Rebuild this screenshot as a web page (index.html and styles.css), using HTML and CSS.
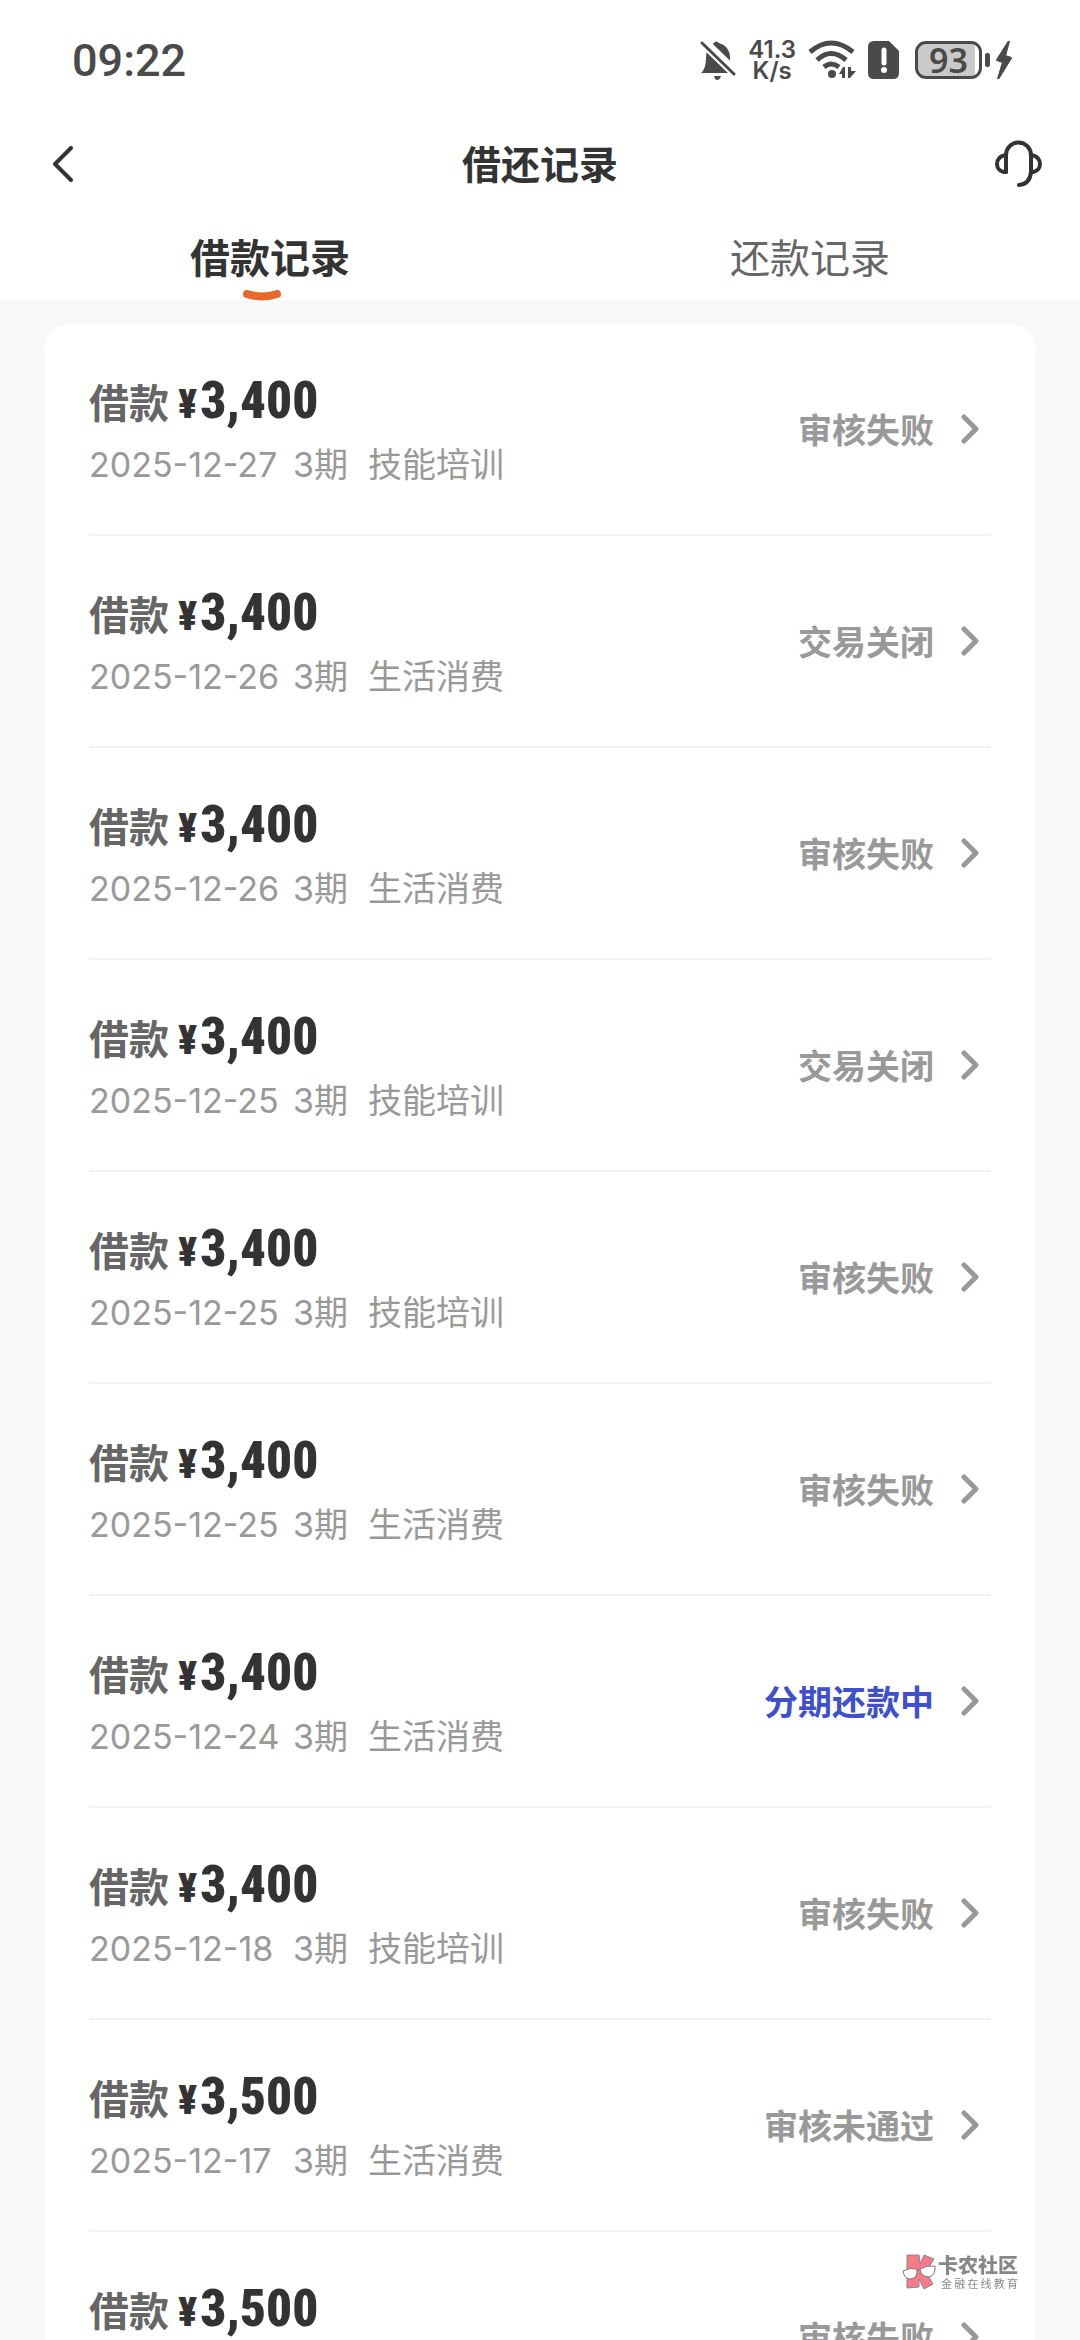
FILE: index.html
```html
<!DOCTYPE html>
<html lang="zh-CN">
  <head>
    <meta charset="utf-8">
    <meta name="viewport" content="width=device-width, initial-scale=1">
    <title>借还记录</title>
    <link rel="stylesheet" href="styles.css">
  </head>
  <body>
    <svg width="0" height="0" class="defs">
      <symbol id="arrow" viewBox="0 0 18 30">
        <path d="M3 3L15 15L3 27" fill="none" stroke="#999" stroke-width="5" stroke-linecap="round" stroke-linejoin="round"/>
      </symbol>
    </svg>

    <div class="app">
      <div class="status-bar">
        <span class="time">09:22</span>
        <div class="status-icons">
          <svg class="bell" width="36" height="40" viewBox="0 0 36 40">
            <path d="M10 6Q12 4 14 3Q16 0 19 3Q30 6 30 18Q30 29 34 33H1Q6 29 6 18Q6 10 10 6Z" fill="#4a4a4a"/>
            <path d="M14 36H21Q20 40 17 40Q15 40 14 36Z" fill="#4a4a4a"/>
            <path d="M0 -5L38 32" stroke="#fff" stroke-width="5"/>
            <path d="M2 3L34 34" stroke="#fff" stroke-width="7"/>
            <path d="M2 3L34 34" stroke="#4a4a4a" stroke-width="3" stroke-linecap="round"/>
          </svg>
          <div class="speed"><span>41.3</span><span>K/s</span></div>
          <svg class="wifi" width="48" height="40" viewBox="0 0 48 40">
            <g fill="none" stroke="#4a4a4a" stroke-width="5">
              <path d="M2 12Q23 -6 45 12"/>
              <path d="M9 20Q23 7 38 20"/>
              <path d="M16 27Q23 21 31 27"/>
            </g>
            <circle cx="24" cy="34" r="4" fill="#4a4a4a"/>
            <path d="M31 34L35 27H37V38H34V34Z" fill="#4a4a4a"/>
            <path d="M40 27H43V31H48L42 38H40Z" fill="#4a4a4a"/>
          </svg>
          <svg class="sim" width="32" height="38" viewBox="0 0 32 38">
            <path d="M6 0H21L31 10V32Q31 38 25 38H6Q0 38 0 32V6Q0 0 6 0Z" fill="#4a4a4a"/>
            <path d="M16 9V22" stroke="#fff" stroke-width="5" stroke-linecap="round"/>
            <circle cx="16" cy="29" r="3" fill="#fff"/>
          </svg>
          <div class="battery">
            <span class="level">93</span>
            <span class="nub"></span>
          </div>
          <svg class="bolt" width="16" height="38" viewBox="0 0 16 38">
            <path d="M13 0L1 19L7 21L2 38L15 17L9 15Z" fill="#4a4a4a" stroke="#4a4a4a" stroke-width="2" stroke-linejoin="round"/>
          </svg>
        </div>
      </div>

      <header class="nav">
        <button class="icon-button back" aria-label="返回">
          <svg width="20" height="36" viewBox="0 0 20 36">
            <path d="M18 2L2 18L18 34" fill="none" stroke="#333" stroke-width="4" stroke-linecap="round" stroke-linejoin="round"/>
          </svg>
        </button>
        <h1>借还记录</h1>
        <button class="icon-button service" aria-label="客服">
          <svg width="47" height="48" viewBox="0 0 47 48">
            <g fill="none" stroke="#333" stroke-width="4" stroke-linecap="round">
              <path d="M11 32V15A12 12 0 0 1 36 15V32Q35 44 24 45"/>
              <path d="M11 15C-1 16 -1 32 11 32"/>
              <path d="M36 15C48 16 48 32 36 32"/>
            </g>
          </svg>
        </button>
      </header>

      <div class="tabs" role="tablist">
        <button class="tab active" role="tab" aria-selected="true">
          <span>借款记录</span>
          <svg class="mark" width="40" height="11" viewBox="0 0 40 11">
            <path d="M5 4Q20 9 35 4" fill="none" stroke="#e8682c" stroke-width="8" stroke-linecap="round"/>
          </svg>
        </button>
        <button class="tab" role="tab" aria-selected="false"><span>还款记录</span></button>
      </div>

      <main>
        <ul class="list">
          <li><a class="record" href="#">
            <div class="info">
              <div class="title">借款 <b><small>¥</small>3,400</b></div>
              <div class="meta"><span class="date">2025-12-27</span><span class="term">3期</span><span>技能培训</span></div>
            </div>
            <span class="state">审核失败</span>
            <svg class="arrow"><use href="#arrow"/></svg>
          </a></li>
          <li><a class="record" href="#">
            <div class="info">
              <div class="title">借款 <b><small>¥</small>3,400</b></div>
              <div class="meta"><span class="date">2025-12-26</span><span class="term">3期</span><span>生活消费</span></div>
            </div>
            <span class="state">交易关闭</span>
            <svg class="arrow"><use href="#arrow"/></svg>
          </a></li>
          <li><a class="record" href="#">
            <div class="info">
              <div class="title">借款 <b><small>¥</small>3,400</b></div>
              <div class="meta"><span class="date">2025-12-26</span><span class="term">3期</span><span>生活消费</span></div>
            </div>
            <span class="state">审核失败</span>
            <svg class="arrow"><use href="#arrow"/></svg>
          </a></li>
          <li><a class="record" href="#">
            <div class="info">
              <div class="title">借款 <b><small>¥</small>3,400</b></div>
              <div class="meta"><span class="date">2025-12-25</span><span class="term">3期</span><span>技能培训</span></div>
            </div>
            <span class="state">交易关闭</span>
            <svg class="arrow"><use href="#arrow"/></svg>
          </a></li>
          <li><a class="record" href="#">
            <div class="info">
              <div class="title">借款 <b><small>¥</small>3,400</b></div>
              <div class="meta"><span class="date">2025-12-25</span><span class="term">3期</span><span>技能培训</span></div>
            </div>
            <span class="state">审核失败</span>
            <svg class="arrow"><use href="#arrow"/></svg>
          </a></li>
          <li><a class="record" href="#">
            <div class="info">
              <div class="title">借款 <b><small>¥</small>3,400</b></div>
              <div class="meta"><span class="date">2025-12-25</span><span class="term">3期</span><span>生活消费</span></div>
            </div>
            <span class="state">审核失败</span>
            <svg class="arrow"><use href="#arrow"/></svg>
          </a></li>
          <li><a class="record" href="#">
            <div class="info">
              <div class="title">借款 <b><small>¥</small>3,400</b></div>
              <div class="meta"><span class="date">2025-12-24</span><span class="term">3期</span><span>生活消费</span></div>
            </div>
            <span class="state repaying">分期还款中</span>
            <svg class="arrow"><use href="#arrow"/></svg>
          </a></li>
          <li><a class="record" href="#">
            <div class="info">
              <div class="title">借款 <b><small>¥</small>3,400</b></div>
              <div class="meta"><span class="date">2025-12-18</span><span class="term">3期</span><span>技能培训</span></div>
            </div>
            <span class="state">审核失败</span>
            <svg class="arrow"><use href="#arrow"/></svg>
          </a></li>
          <li><a class="record" href="#">
            <div class="info">
              <div class="title">借款 <b><small>¥</small>3,500</b></div>
              <div class="meta"><span class="date">2025-12-17</span><span class="term">3期</span><span>生活消费</span></div>
            </div>
            <span class="state">审核未通过</span>
            <svg class="arrow"><use href="#arrow"/></svg>
          </a></li>
          <li><a class="record" href="#">
            <div class="info">
              <div class="title">借款 <b><small>¥</small>3,500</b></div>
            </div>
            <span class="state">审核失败</span>
            <svg class="arrow"><use href="#arrow"/></svg>
          </a></li>
        </ul>
      </main>
    </div>

    <div class="watermark">
      <svg width="34" height="36" viewBox="0 0 34 36">
        <path d="M5 1L17 1L18 10L22 1L32 5L24 18L31 30L22 35L17 25V33L5 34Z" fill="#f77a88" stroke="#888" stroke-linejoin="round"/>
        <path d="M1 17Q8 13 15 15Q16 24 9 25Q2 25 1 17Z" fill="#fff" stroke="#777"/>
        <path d="M18 15Q25 11 33 12Q34 21 27 23Q19 23 18 15Z" fill="#fff" stroke="#777"/>
        <path d="M15 16L18 15" stroke="#777"/>
      </svg>
      <div class="brand">
        <strong>卡农社区</strong>
        <span>金融在线教育</span>
      </div>
    </div>
  </body>
</html>
```
FILE: styles.css
```css
* {
  box-sizing: border-box;
}

body {
  margin: 0;
  background-color: #f8f8f8;
  color: #333;
  font-family: "Noto Sans CJK SC", sans-serif;
}

button {
  padding: 0;
  border: none;
  background: none;
  color: inherit;
  font: inherit;
  cursor: pointer;
}

svg {
  display: block;
  flex: none;
}

.defs {
  position: absolute;
}

.app {
  display: flex;
  flex-direction: column;
  height: 100vh;
}

/* status bar */

.status-bar {
  display: flex;
  flex: none;
  align-items: center;
  justify-content: space-between;
  height: 120px;
  padding: 0 68px 0 72px;
  background-color: #fff;
  color: #4a4a4a;
}

.time {
  font: 500 45px Roboto, sans-serif;
}

.status-icons {
  display: flex;
  align-items: center;
  gap: 12px;
}

.speed {
  display: flex;
  flex-direction: column;
  align-items: center;
  font: 600 24px/21px Inter, sans-serif;
}

.battery {
  display: flex;
  align-items: center;
  gap: 3px;
  margin-left: 3px;
}

.level {
  width: 67px;
  height: 38px;
  border: 3px solid #4a4a4a;
  border-radius: 11px;
  background: linear-gradient(to right, #cacaca 93%, #fff 93%);
  font: 600 34px/32px "Noto Sans", sans-serif;
  text-align: center;
}

.nub {
  width: 5px;
  height: 14px;
  border-radius: 2px;
  background-color: #4a4a4a;
}

.bolt {
  margin-left: -6px;
}

/* title and tabs */

.nav {
  display: grid;
  grid-template-columns: 1fr auto 1fr;
  flex: none;
  align-items: center;
  height: 88px;
  padding: 0 38px;
  background-color: #fff;
}

.nav h1 {
  margin: 0;
  padding-bottom: 4px;
  font-size: 39px;
  line-height: 48px;
}

.back {
  justify-self: start;
  padding-left: 15px;
}

.service {
  justify-self: end;
}

.tabs {
  display: flex;
  flex: none;
  height: 93px;
  background-color: #fff;
}

.tab {
  display: flex;
  flex: 1;
  flex-direction: column;
  align-items: center;
  gap: 10px;
  padding-top: 24px;
  color: #666;
  font-size: 40px;
  line-height: 48px;
}

.tab.active {
  color: #333;
  font-weight: bold;
}

.mark {
  margin-right: 16px;
}

/* record list */

main {
  flex: 1;
  min-height: 0;
  padding: 23px 45px 0;
  overflow-y: auto;
  scrollbar-width: none;
}

.list {
  margin: 0;
  padding: 0 44px;
  border-radius: 24px;
  background-color: #fff;
  list-style: none;
}

.record {
  display: flex;
  align-items: center;
  height: 212px;
  border-bottom: 2px solid #f2f2f2;
  color: #999;
  text-decoration: none;
}

.info {
  flex: 1;
  align-self: flex-start;
  padding-top: 45px;
}

.title {
  display: flex;
  align-items: baseline;
  gap: 9px;
  height: 69px;
  color: #666;
  font-size: 40px;
  font-weight: bold;
  line-height: 64px;
}

.title b {
  color: #333;
  font-family: "Roboto Condensed", "Liberation Sans Narrow", Roboto, sans-serif;
  font-size: 51px;
}

.title small {
  margin-right: 3px;
  font-size: 40px;
}

.meta {
  display: flex;
  height: 54px;
  font-family: Inter, "Noto Sans CJK SC", sans-serif;
  font-size: 34px;
  line-height: 54px;
}

.date {
  min-width: 204px;
}

.term {
  min-width: 75px;
}

.state {
  font-size: 34px;
  font-weight: bold;
  line-height: 54px;
}

.repaying {
  color: #3e50cc;
}

.arrow {
  width: 18px;
  height: 30px;
  margin: 0 12px 0 27px;
}

/* community badge over the list */

.watermark {
  display: flex;
  position: fixed;
  right: 62px;
  bottom: 50px;
  align-items: center;
  gap: 2px;
  color: #888;
}

.brand {
  display: flex;
  flex-direction: column;
  width: 80px;
}

.brand strong {
  font-size: 20px;
  font-weight: 900;
  line-height: 22px;
}

.brand span {
  padding-left: 3px;
  font-size: 11px;
  line-height: 14px;
  text-align-last: justify;
}
```
